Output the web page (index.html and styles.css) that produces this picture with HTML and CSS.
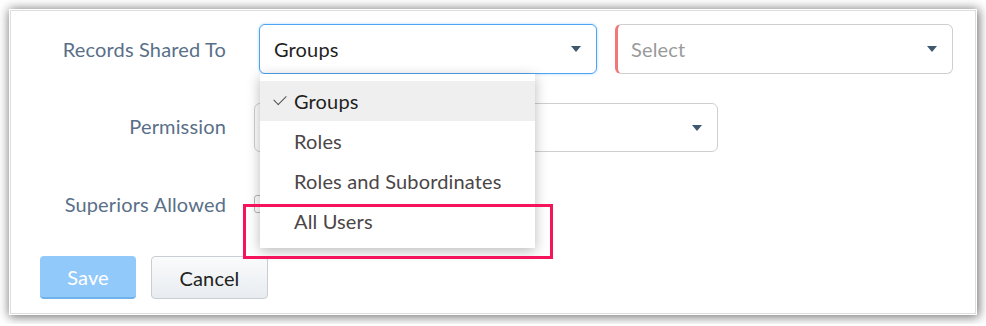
FILE: index.html
```html
<!DOCTYPE html>
<html>
<head>
    <title>Sharing Rule</title>
    <link rel="stylesheet" href="styles.css">
</head>
<body>
    <div class="card">
        <div class="row row-shared">
            <label class="field-label">Records Shared To</label>
            <div class="select-wrap">
                <div class="select focused">
                    <span class="value">Groups</span>
                    <span class="caret"></span>
                </div>
                <ul class="menu">
                    <li class="menu-item selected"><span class="tick"></span>Groups</li>
                    <li class="menu-item">Roles</li>
                    <li class="menu-item">Roles and Subordinates</li>
                    <li class="menu-item">All Users</li>
                </ul>
            </div>
            <div class="select required">
                <span class="placeholder">Select</span>
                <span class="caret"></span>
            </div>
        </div>

        <div class="row row-permission">
            <label class="field-label">Permission</label>
            <div class="select wide">
                <span class="value"></span>
                <span class="caret"></span>
            </div>
        </div>

        <div class="row row-superiors">
            <label class="field-label">Superiors Allowed</label>
            <span class="checkbox"></span>
        </div>

        <div class="actions">
            <button type="button" class="btn btn-save">Save</button>
            <button type="button" class="btn btn-cancel">Cancel</button>
        </div>

        <div class="highlight"></div>
    </div>
</body>
</html>
```

FILE: styles.css
```css
body { margin: 0; background: #fff; font-family: Lato, "Open Sans", Arial, sans-serif; letter-spacing: 0.15px; }
.card { position: relative; margin: 10px; height: 304px; box-sizing: border-box; background: #fff; border: 1px solid #dedede; box-shadow: 0 0 0 1px #fff, 1px 1px 10px 2px rgba(0,0,0,0.55); }

.row { display: flex; align-items: center; }
.row-shared { margin-top: 13px; height: 50px; }
.row-permission { margin-top: 29px; height: 49px; }
.row-permission .field-label { margin-top: -4px; }
.row-superiors { margin-top: 33px; height: 38px; }

.field-label { width: 215px; text-align: right; font-size: 20px; color: #5a6f88; }

.select { position: relative; box-sizing: border-box; height: 50px; width: 338px; border: 1px solid #cfcfcf; border-radius: 6px; background: #fff; display: flex; align-items: center; padding-left: 14px; font-size: 20px; color: #1f1f1f; }
.select.focused { border-color: #4fa3f3; box-shadow: 0 0 3px rgba(79,163,243,0.45); }
.select.required { margin-left: 18px; border-left: 3px solid #f07878; padding-left: 13px; }
.select.wide { margin-left: 28px; width: 464px; height: 49px; }
.placeholder { color: #9a9a9a; }
.caret { position: absolute; right: 15px; top: 50%; margin-top: -3px; width: 0; height: 0; border-left: 5px solid transparent; border-right: 5px solid transparent; border-top: 6px solid #3e5870; }

.select-wrap { position: relative; margin-left: 33px; }

.menu { position: absolute; left: 1px; top: 50px; width: 275px; margin: 0; padding: 7px 0; list-style: none; background: #fff; box-shadow: 0 3px 12px rgba(0,0,0,0.28); z-index: 2; }
.menu-item { position: relative; height: 40px; line-height: 41px; padding-left: 34px; font-size: 20px; color: #4b4646; }
.menu-item.selected { background: #efefef; color: #1f1f1f; }
.tick { position: absolute; left: 14px; top: 14px; width: 11px; height: 6px; border-left: 1.5px solid #555; border-bottom: 1.5px solid #555; transform: rotate(-45deg); }

.checkbox { margin-left: 28px; width: 18px; height: 18px; box-sizing: border-box; border: 1px solid #b8b8b8; border-radius: 3px; background: #fff; }

.actions { display: flex; gap: 15px; margin-top: 33px; padding-left: 29px; }
.btn { box-sizing: border-box; height: 43px; border-radius: 4px; font-family: inherit; font-size: 20px; letter-spacing: 0.15px; cursor: pointer; }
.btn-save { width: 96px; border: none; border-bottom: 2px solid #70b2ec; background: #92c9fb; color: #fff; }
.btn-cancel { width: 117px; border: 1px solid #c9ced4; background: linear-gradient(#fafbfc, #e8ecf0); color: #222; }

.highlight { position: absolute; left: 232px; top: 193px; width: 310px; height: 55px; box-sizing: border-box; border: 3px solid #f5135b; z-index: 3; }
```
